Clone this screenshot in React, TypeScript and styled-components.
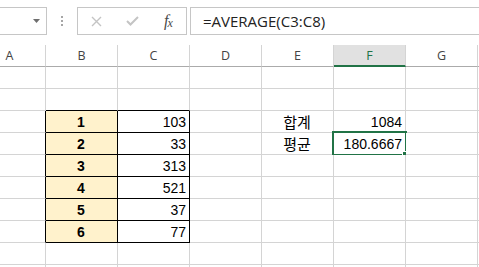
import React from 'react'
import styled, { createGlobalStyle, css } from 'styled-components'

const GlobalStyle = createGlobalStyle`
  html, body {
    margin: 0;
    padding: 0;
    background: #ffffff;
  }
`

const colors = {
  grid: '#d4d4d4',
  frame: '#c6c6c6',
  headerLine: '#ababab',
  green: '#217346',
  fill: '#fff2cc',
  text: '#000000',
  header: '#444444',
}

const Sheet = styled.div`
  width: 479px;
  height: 267px;
  overflow: hidden;
  background: #ffffff;
`

const FormulaBar = styled.div`
  display: flex;
  align-items: flex-start;
  height: 45px;
  box-sizing: border-box;
  padding-top: 7px;
`

const boxStyle = css`
  box-sizing: border-box;
  height: 28px;
  border: 1px solid ${colors.frame};
  background: #ffffff;
`

const NameBox = styled.div`
  ${boxStyle}
  width: 48px;
  margin-left: -1px;
  display: flex;
  align-items: center;
  justify-content: flex-end;
  padding-right: 6px;
`

const Grip = styled.div`
  width: 30px;
  height: 28px;
  display: flex;
  flex-direction: column;
  align-items: center;
  justify-content: center;
  gap: 2px;
`

const GripDot = styled.span`
  width: 2px;
  height: 2px;
  background: #a6a6a6;
`

const ButtonBox = styled.div`
  ${boxStyle}
  width: 110px;
  display: flex;
`

const ButtonSlot = styled.div`
  width: 36px;
  height: 26px;
  display: flex;
  align-items: center;
  justify-content: center;
`

const FxLabel = styled.span`
  font-family: 'Liberation Serif', 'DejaVu Serif', serif;
  font-style: italic;
  font-size: 16px;
  color: #4a4a4a;
  letter-spacing: -1px;

  & > sub {
    font-size: 12px;
    vertical-align: -1px;
  }
`

const FormulaInput = styled.div`
  ${boxStyle}
  flex: 1;
  margin-left: 3px;
  margin-right: -1px;
  display: flex;
  align-items: center;
  padding-left: 12px;
  font-family: 'Open Sans', 'Noto Sans', sans-serif;
  font-size: 15px;
  color: #222222;
`

const GridWrap = styled.div`
  overflow: hidden;
`

const Grid = styled.div`
  display: grid;
  grid-template-columns: repeat(8, 72px);
  grid-auto-rows: 22px;
  margin-left: -26px;
`

const HeaderCell = styled.div<{ $active?: boolean }>`
  box-sizing: border-box;
  display: flex;
  align-items: center;
  justify-content: center;
  border-right: 1px solid ${colors.grid};
  border-bottom: ${(p) => (p.$active ? `2px solid ${colors.green}` : `1px solid ${colors.headerLine}`)};
  background: ${(p) => (p.$active ? '#e1e1e1' : '#ffffff')};
  color: ${(p) => (p.$active ? colors.green : colors.header)};
  font-family: 'Open Sans', 'Noto Sans', sans-serif;
  font-size: 12.5px;
  padding-top: ${(p) => (p.$active ? '1px' : '0')};
`

type Align = 'left' | 'center' | 'right'

const Cell = styled.div<{
  $right: string
  $bottom: string
  $fill?: string
  $align: Align
  $bold?: boolean
  $korean?: boolean
}>`
  position: relative;
  box-sizing: border-box;
  display: flex;
  align-items: center;
  justify-content: ${(p) =>
    p.$align === 'right' ? 'flex-end' : p.$align === 'center' ? 'center' : 'flex-start'};
  padding: 0 3px 0 2px;
  border-right: 1px solid ${(p) => p.$right};
  border-bottom: 1px solid ${(p) => p.$bottom};
  background: ${(p) => p.$fill ?? '#ffffff'};
  font-family: ${(p) =>
    p.$korean
      ? "'Noto Sans CJK KR', 'Noto Sans', sans-serif"
      : "'Liberation Sans', Arial, sans-serif"};
  font-size: ${(p) => (p.$korean ? '15px' : '14px')};
  font-weight: ${(p) => (p.$bold ? 700 : 400)};
  color: ${colors.text};
  white-space: nowrap;
`

const Selection = styled.div`
  position: absolute;
  top: -2px;
  left: -2px;
  right: -2px;
  bottom: -2px;
  border: 2px solid ${colors.green};
  pointer-events: none;
`

const FillHandle = styled.span`
  position: absolute;
  right: -4px;
  bottom: -4px;
  width: 5px;
  height: 5px;
  background: ${colors.green};
  border: 1px solid #ffffff;
`

const columns = ['A', 'B', 'C', 'D', 'E', 'F', 'G', 'H']
const values = [103, 33, 313, 521, 37, 77]

interface CellData {
  text?: string
  align?: Align
  bold?: boolean
  fill?: string
  korean?: boolean
  selected?: boolean
}

const getCell = (row: number, col: number): CellData => {
  const tableRow = row >= 3 && row <= 8
  if (tableRow && col === 1) {
    return { text: String(row - 2), align: 'center', bold: true, fill: colors.fill }
  }
  if (tableRow && col === 2) return { text: String(values[row - 3]), align: 'right' }
  if (row === 3 && col === 4) return { text: '합계', align: 'center', korean: true }
  if (row === 3 && col === 5) return { text: '1084', align: 'right' }
  if (row === 4 && col === 4) return { text: '평균', align: 'center', korean: true }
  if (row === 4 && col === 5) return { text: '180.6667', align: 'right', selected: true }
  return {}
}

const borderColor = (row: number, col: number, side: 'right' | 'bottom') => {
  if (side === 'right' && row >= 3 && row <= 8 && col <= 2) return '#000000'
  if (side === 'bottom' && row >= 2 && row <= 8 && (col === 1 || col === 2)) return '#000000'
  return colors.grid
}

const DropArrow = () => (
  <svg width="7" height="4" viewBox="0 0 7 4">
    <polygon points="0,0 7,0 3.5,4" fill="#6e6e6e" />
  </svg>
)

const CancelIcon = () => (
  <svg width="11" height="11" viewBox="0 0 11 11">
    <path d="M1 1 L10 10 M10 1 L1 10" stroke="#c4c4c4" strokeWidth="1.4" fill="none" />
  </svg>
)

const EnterIcon = () => (
  <svg width="13" height="10" viewBox="0 0 13 10">
    <path d="M1 5 L4.5 8.5 L12 1" stroke="#c4c4c4" strokeWidth="2" fill="none" />
  </svg>
)

const App: React.FC = () => {
  const rows = Array.from({ length: 10 }, (_, i) => i + 1)
  return (
    <Sheet>
      <GlobalStyle />
      <FormulaBar>
        <NameBox>
          <DropArrow />
        </NameBox>
        <Grip>
          <GripDot />
          <GripDot />
          <GripDot />
        </Grip>
        <ButtonBox>
          <ButtonSlot>
            <CancelIcon />
          </ButtonSlot>
          <ButtonSlot>
            <EnterIcon />
          </ButtonSlot>
          <ButtonSlot>
            <FxLabel>
              f<sub>x</sub>
            </FxLabel>
          </ButtonSlot>
        </ButtonBox>
        <FormulaInput>=AVERAGE(C3:C8)</FormulaInput>
      </FormulaBar>
      <GridWrap>
        <Grid>
          {columns.map((c) => (
            <HeaderCell key={c} $active={c === 'F'}>
              {c === 'H' ? null : c}
            </HeaderCell>
          ))}
          {rows.map((r) =>
            columns.map((c, ci) => {
              const data = getCell(r, ci)
              return (
                <Cell
                  key={`${c}${r}`}
                  $right={borderColor(r, ci, 'right')}
                  $bottom={borderColor(r, ci, 'bottom')}
                  $fill={data.fill}
                  $align={data.align ?? 'left'}
                  $bold={data.bold}
                  $korean={data.korean}
                >
                  {data.text}
                  {data.selected && (
                    <Selection>
                      <FillHandle />
                    </Selection>
                  )}
                </Cell>
              )
            }),
          )}
        </Grid>
      </GridWrap>
    </Sheet>
  )
}

export default App
